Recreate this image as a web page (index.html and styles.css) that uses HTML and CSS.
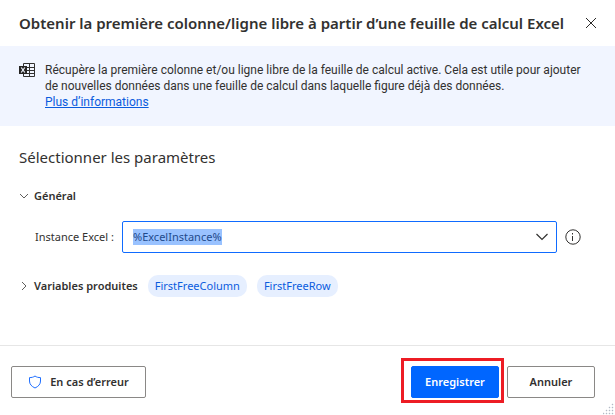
FILE: index.html
```
<!DOCTYPE html>
<html lang="fr">
<head>
<meta charset="utf-8">
<title>Obtenir la première colonne/ligne libre</title>
<link rel="stylesheet" href="styles.css">
</head>
<body>
<main class="dialog">
  <header class="titlebar">
    <h1 class="title">Obtenir la première colonne/ligne libre à partir d’une feuille de calcul Excel</h1>
    <button class="icon-button" type="button" aria-label="Fermer">
      <svg width="12" height="12" viewBox="0 0 12 12" fill="none" stroke="#2b2a29"><path d="M1 1l10 10M11 1L1 11"/></svg>
    </button>
  </header>

  <section class="banner">
    <svg class="banner-icon" width="16" height="16" viewBox="0 0 16 16">
      <path d="M4.500 1.500h11v13h-11zM4 5.500h11M4 8.500h11M4 11.500h11M10.500 2v12" fill="none" stroke="#323130"/>
      <path d="M0 4h8v8H0z" fill="#252423"/>
      <path d="M2.200 5.500l3.600 5M5.800 5.500l-3.600 5" stroke="#f1f5ff" stroke-width="1.200"/>
    </svg>
    <div class="banner-text">
      <p class="line">Récupère la première colonne et/ou ligne libre de la feuille de calcul active. Cela est utile pour ajouter</p>
      <p class="line">de nouvelles données dans une feuille de calcul dans laquelle figure déjà des données.</p>
      <a class="link" href="#">Plus d’informations</a>
    </div>
  </section>

  <section class="content">
    <h2 class="subtitle">Sélectionner les paramètres</h2>
    <button class="group" type="button" aria-expanded="true">
      <svg width="10" height="10" viewBox="0 0 10 10" fill="none" stroke="#605e5c"><path d="M1 3l4 4 4-4"/></svg>
      Général
    </button>
    <div class="field">
      <label class="field-label" for="instance">Instance Excel :</label>
      <div class="combo">
        <input class="combo-input" id="instance" type="text" value="%ExcelInstance%">
        <button class="icon-button" type="button" aria-label="Ouvrir la liste">
          <svg width="14" height="10" viewBox="0 0 14 10" fill="none" stroke="#323130" stroke-width="1.200"><path d="M1.500 2L7 7.500 12.500 2"/></svg>
        </button>
      </div>
      <button class="icon-button" type="button" aria-label="Informations">
        <svg width="16" height="16" viewBox="0 0 16 16" fill="none" stroke="#323130"><circle cx="8" cy="8" r="7.200"/><path d="M7.500 7v5M7.500 4v1.500"/></svg>
      </button>
    </div>
    <div class="outputs">
      <button class="group" type="button" aria-expanded="false">
        <svg width="10" height="10" viewBox="0 0 10 10" fill="none" stroke="#605e5c"><path d="M3 1l4 4-4 4"/></svg>
        Variables produites
      </button>
      <button class="chip" type="button">FirstFreeColumn</button>
      <button class="chip" type="button">FirstFreeRow</button>
    </div>
  </section>

  <footer class="footer">
    <button class="button button-error" type="button">
      <svg width="14" height="14" viewBox="0 0 14 14" fill="none" stroke="#1f6fff"><path d="M7 1C5.500 2.200 3.500 2.600 1.500 2.600V6c0 3.200 2 5.400 5.500 7 3.500-1.600 5.500-3.800 5.500-7V2.600C10.500 2.600 8.500 2.200 7 1z"/></svg>
      En cas d’erreur
    </button>
    <div class="highlight"><button class="button button-primary" type="button">Enregistrer</button></div>
    <button class="button" type="button">Annuler</button>
  </footer>
  <svg class="grip" width="12" height="12" viewBox="0 0 12 12" fill="#b4bac6"><path d="M9 1h1v1H9zM6 4h1v1H6zM9 4h1v1H9zM3 7h1v1H3zM6 7h1v1H6zM9 7h1v1H9zM0 10h1v1H0zM3 10h1v1H3zM6 10h1v1H6zM9 10h1v1H9z" stroke="#b4bac6" stroke-width=".4"/></svg>
</main>
</body>
</html>
```
FILE: styles.css
```
* {
  box-sizing: border-box;
}

body {
  margin: 0;
  background: #fff;
  color: #323130;
  font: 11px/16px "Segoe UI", "Noto Sans", sans-serif;
}

h1, h2, p {
  margin: 0;
}

button, input {
  font: inherit;
  color: inherit;
}

svg {
  display: block;
  flex: none;
}

.dialog {
  position: relative;
  display: flex;
  flex-direction: column;
  min-height: 100vh;
}

.titlebar {
  display: flex;
  align-items: center;
  justify-content: space-between;
  height: 46px;
  padding: 0 18px 0 19px;
}

.title {
  font-size: 15px;
  font-weight: 600;
  line-height: 20px;
  white-space: nowrap;
}

.icon-button {
  display: flex;
  padding: 0;
  border: 0;
  background: none;
}

.banner {
  display: flex;
  gap: 10px;
  padding: 16px 19px;
  background: #f1f5ff;
}

.banner-text {
  font-family: "Segoe UI", Roboto, sans-serif;
  font-size: 12px;
  white-space: nowrap;
}

.link {
  color: #0b5cde;
}

.content {
  flex: 1;
  padding: 19px 34px 20px 19px;
}

.subtitle {
  font-size: 15px;
  font-weight: 400;
  line-height: 24px;
}

.group {
  display: flex;
  align-items: center;
  gap: 5px;
  padding: 0;
  border: 0;
  background: none;
  font-weight: 600;
  white-space: nowrap;
}

.subtitle + .group {
  margin-top: 19px;
}

.field {
  display: flex;
  align-items: center;
  margin-top: 17px;
  padding-left: 16px;
}

.field-label {
  width: 87px;
  white-space: nowrap;
}

.combo {
  display: flex;
  flex: 1;
  align-items: center;
  justify-content: space-between;
  height: 32px;
  margin-right: 8px;
  padding: 0 7px 0 10px;
  border: 1px solid #0f6bff;
  border-radius: 2px;
}

.combo-input {
  field-sizing: content;
  height: 16px;
  padding: 0;
  border: 0;
  outline: 0;
  background: #99c2ff;
  color: #1f4a8c;
}

.outputs {
  display: flex;
  align-items: center;
  gap: 10px;
  margin-top: 22px;
}

.chip {
  height: 22px;
  padding: 0 7px;
  border: 0;
  border-radius: 10px;
  background: #e6efff;
  color: #0b5cde;
}

.footer {
  display: flex;
  align-items: center;
  height: 70px;
  padding: 3px 20px 0 11px;
  border-top: 1px solid #e6e6e6;
}

.button {
  display: flex;
  align-items: center;
  justify-content: center;
  gap: 8px;
  width: 88px;
  height: 32px;
  padding: 0;
  border: 1px solid #8a8886;
  border-radius: 2px;
  background: #fff;
  font-weight: 600;
}

.button-error {
  width: 135px;
  margin-right: auto;
}

.button-primary {
  border-color: #0066ff;
  background: #0066ff;
  color: #fff;
}

.highlight {
  margin: 0 3px 3px 0;
  padding: 5px 2px 2px 7px;
  border: 3px solid #ed1c24;
}

.grip {
  position: absolute;
  right: 0;
  bottom: 0;
}
```
